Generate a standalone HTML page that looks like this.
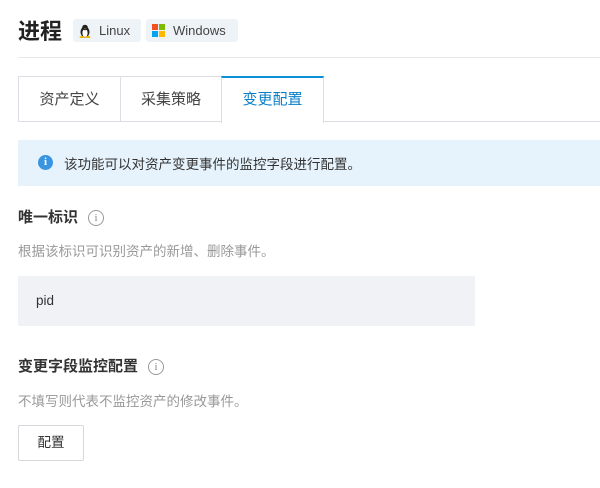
<!DOCTYPE html>
<html><head><meta charset="utf-8"><style>
*{margin:0;padding:0;box-sizing:border-box}
body{width:600px;height:488px;background:#fff;font-family:"Liberation Sans","Noto Sans CJK SC",sans-serif;color:#333;position:relative;overflow:hidden}
.a{position:absolute}
.tag{position:absolute;top:19px;height:23px;background:#eef3f8;border-radius:3px;font-size:13px;color:#444;line-height:23px}
.tab{position:absolute;top:76px;height:46px;border:1px solid #dcdee3;border-bottom:none;font-size:15px;color:#444;text-align:center;line-height:46px}
.h{position:absolute;left:18px;font-size:15px;font-weight:bold;color:#333}
.d{position:absolute;left:18px;font-size:13.5px;color:#999}
.ic{display:inline-block;width:16px;height:16px;border:1px solid #999;border-radius:50%;font-size:11px;line-height:14px;text-align:center;color:#888;font-weight:normal;vertical-align:1px;margin-left:10px;font-family:"Liberation Serif",serif}
</style></head><body>
<div class="a" style="left:18px;top:14px;font-size:22px;font-weight:bold;color:#222">进程</div>
<div class="tag" style="left:73px;width:68px"><svg class="a" style="left:6px;top:5px" width="12" height="14" viewBox="0 0 12 14"><ellipse cx="6" cy="8" rx="4.5" ry="5.5" fill="#222"/><ellipse cx="6" cy="9" rx="2.6" ry="4" fill="#fff"/><circle cx="6" cy="3.5" r="2.8" fill="#222"/><ellipse cx="3" cy="13" rx="2.5" ry="1" fill="#f0b400"/><ellipse cx="9" cy="13" rx="2.5" ry="1" fill="#f0b400"/><path d="M5 4.5h2l-1 1z" fill="#f0b400"/></svg><span class="a" style="left:26px">Linux</span></div>
<div class="tag" style="left:146px;width:92px"><svg class="a" style="left:6px;top:5px" width="13" height="13"><rect width="6" height="6" fill="#f25022"/><rect x="7" width="6" height="6" fill="#7fba00"/><rect y="7" width="6" height="6" fill="#00a4ef"/><rect x="7" y="7" width="6" height="6" fill="#ffb900"/></svg><span class="a" style="left:27px">Windows</span></div>
<div class="a" style="left:18px;top:57px;width:582px;height:1px;background:#e8e8e8"></div>
<div class="a" style="left:18px;top:121px;width:582px;height:1px;background:#dcdee3"></div>
<div class="tab" style="left:18px;width:103px">资产定义</div>
<div class="tab" style="left:120px;width:102px">采集策略</div>
<div class="tab" style="left:221px;width:103px;border-top:2px solid #0a8fd8;color:#0a7fc8;background:#fff;height:47px;line-height:44px">变更配置</div>
<div class="a" style="left:18px;top:140px;width:582px;height:46px;background:#e6f3fc"></div>
<div class="a" style="left:38px;top:155px;width:15px;height:15px;border-radius:50%;background:#3a95e0;color:#fff;font-size:11px;line-height:15px;text-align:center;font-weight:bold;font-family:'Liberation Serif',serif">i</div>
<div class="a" style="left:64px;top:153px;font-size:13.5px;color:#333">该功能可以对资产变更事件的监控字段进行配置。</div>
<div class="h" style="top:206px">唯一标识<span class="ic">i</span></div>
<div class="d" style="top:240px">根据该标识可识别资产的新增、删除事件。</div>
<div class="a" style="left:18px;top:276px;width:457px;height:50px;background:#f0f2f5;font-size:13.5px;color:#333;padding-left:18px;line-height:50px">pid</div>
<div class="h" style="top:355px">变更字段监控配置<span class="ic">i</span></div>
<div class="d" style="top:390px">不填写则代表不监控资产的修改事件。</div>
<div class="a" style="left:18px;top:425px;width:66px;height:36px;border:1px solid #d6d8dc;border-radius:2px;font-size:13.5px;line-height:34px;text-align:center;color:#333">配置</div>
</body></html>
